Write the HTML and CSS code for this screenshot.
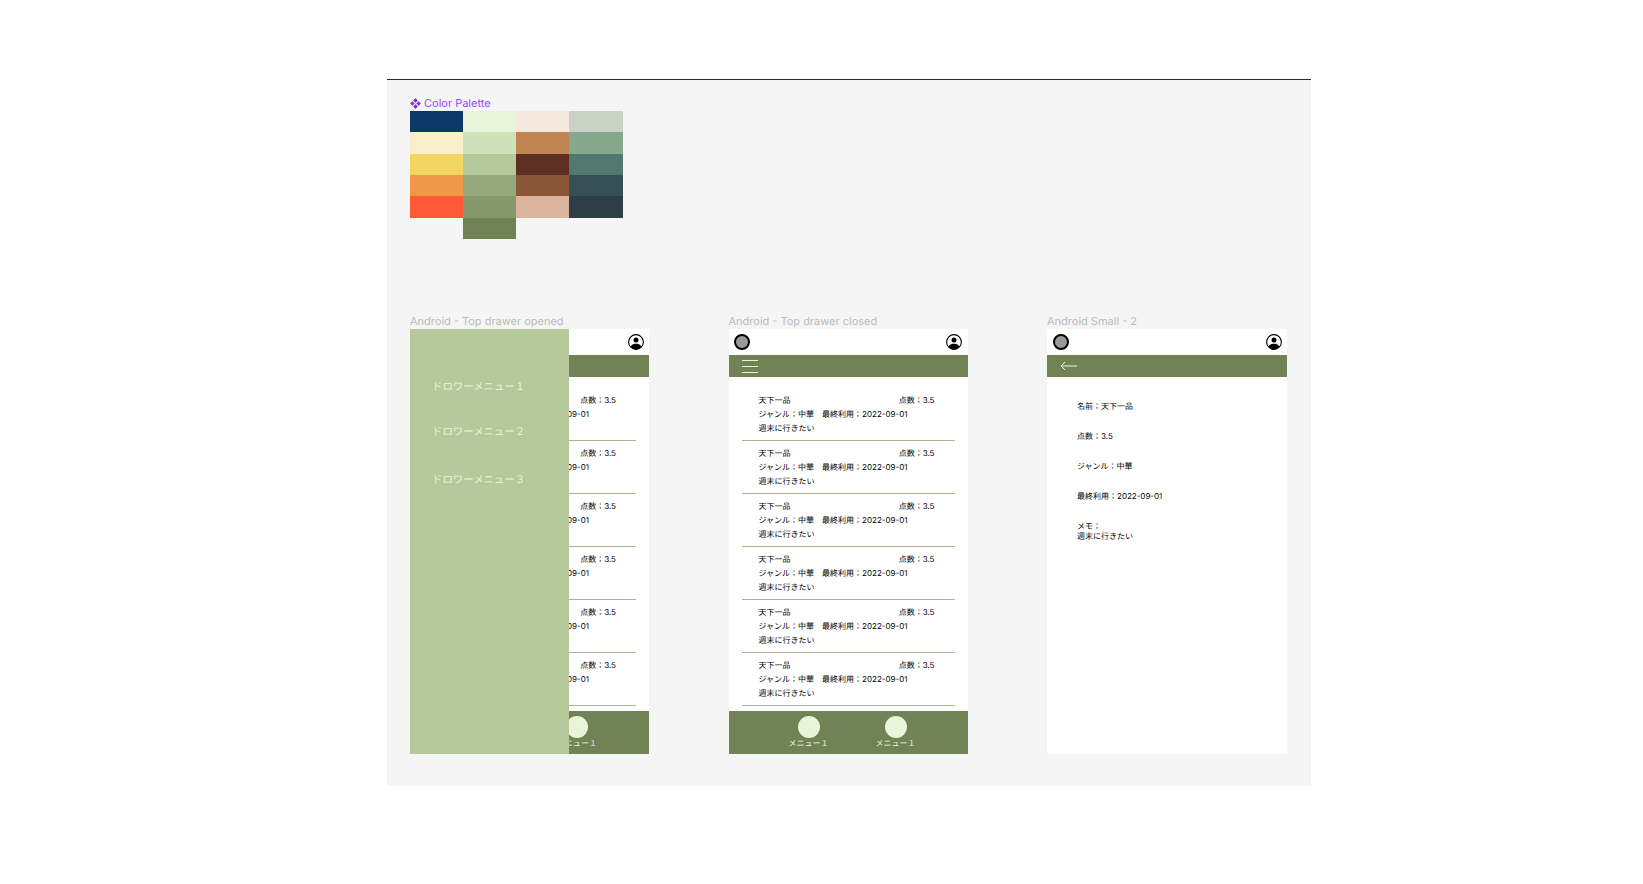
FILE: index.html
```html
<!DOCTYPE html>
<html lang="ja">
<head>
    <meta charset="UTF-8">
    <meta name="viewport" content="width=device-width, initial-scale=1.0">
    <title>Color Palette</title>
    <link rel="stylesheet" href="styles.css">
</head>
<body>
    <div class="canvas">
        <div class="palette-label">
            <svg class="component-icon" width="11" height="11" viewBox="0 0 10 10">
                <path d="M5 .3 6.9 2.2 5 4.1 3.1 2.2ZM2.2 3.1 4.1 5 2.2 6.9 .3 5ZM7.8 3.1 9.7 5 7.8 6.9 5.9 5ZM5 5.9 6.9 7.8 5 9.7 3.1 7.8Z"/>
            </svg>
            Color Palette
        </div>
        <div class="palette">
            <div class="swatch-col">
                <div class="swatch c-navy"></div>
                <div class="swatch c-cream"></div>
                <div class="swatch c-yellow"></div>
                <div class="swatch c-orange"></div>
                <div class="swatch c-red"></div>
            </div>
            <div class="swatch-col">
                <div class="swatch c-green1"></div>
                <div class="swatch c-green2"></div>
                <div class="swatch c-green3"></div>
                <div class="swatch c-green4"></div>
                <div class="swatch c-green5"></div>
                <div class="swatch c-green6"></div>
            </div>
            <div class="swatch-col">
                <div class="swatch c-brown1"></div>
                <div class="swatch c-brown2"></div>
                <div class="swatch c-brown3"></div>
                <div class="swatch c-brown4"></div>
                <div class="swatch c-brown5"></div>
            </div>
            <div class="swatch-col">
                <div class="swatch c-slate1"></div>
                <div class="swatch c-slate2"></div>
                <div class="swatch c-slate3"></div>
                <div class="swatch c-slate4"></div>
                <div class="swatch c-slate5"></div>
            </div>
        </div>

        <div class="frames">
            <section class="frame">
                <div class="frame-label">Android - Top drawer opened</div>
                <div class="screen">
                    <header class="top">
                        <span class="logo"></span>
                        <svg class="user" viewBox="0 0 16 16" width="16" height="16">
                            <circle cx="8" cy="8" r="7.4" fill="#fff" stroke="#000" stroke-width="1.1"/>
                            <circle cx="8" cy="6" r="2.5"/>
                            <path d="M2.8 12.2C4 10.2 6 9.8 8 9.8s4 .4 5.2 2.4C12 14.4 10 15.4 8 15.4s-4-1-5.2-3.2Z"/>
                        </svg>
                    </header>
                    <div class="bar"></div>
                    <ul class="list">
                        <li class="item"><div class="item-head"><span>天下一品</span><span class="score">点数：3.5</span></div><div>ジャンル：中華　最終利用：2022-09-01</div><div>週末に行きたい</div></li>
                        <li class="item"><div class="item-head"><span>天下一品</span><span class="score">点数：3.5</span></div><div>ジャンル：中華　最終利用：2022-09-01</div><div>週末に行きたい</div></li>
                        <li class="item"><div class="item-head"><span>天下一品</span><span class="score">点数：3.5</span></div><div>ジャンル：中華　最終利用：2022-09-01</div><div>週末に行きたい</div></li>
                        <li class="item"><div class="item-head"><span>天下一品</span><span class="score">点数：3.5</span></div><div>ジャンル：中華　最終利用：2022-09-01</div><div>週末に行きたい</div></li>
                        <li class="item"><div class="item-head"><span>天下一品</span><span class="score">点数：3.5</span></div><div>ジャンル：中華　最終利用：2022-09-01</div><div>週末に行きたい</div></li>
                        <li class="item"><div class="item-head"><span>天下一品</span><span class="score">点数：3.5</span></div><div>ジャンル：中華　最終利用：2022-09-01</div><div>週末に行きたい</div></li>
                    </ul>
                    <nav class="tabs">
                        <div class="tab"><span class="tab-dot"></span>メニュー１</div>
                        <div class="tab"><span class="tab-dot"></span>メニュー１</div>
                    </nav>
                    <aside class="drawer">
                        <div class="drawer-item first">ドロワーメニュー１</div>
                        <div class="drawer-item second">ドロワーメニュー２</div>
                        <div class="drawer-item third">ドロワーメニュー３</div>
                    </aside>
                </div>
            </section>

            <section class="frame">
                <div class="frame-label">Android - Top drawer closed</div>
                <div class="screen">
                    <header class="top">
                        <span class="logo"></span>
                        <svg class="user" viewBox="0 0 16 16" width="16" height="16">
                            <circle cx="8" cy="8" r="7.4" fill="#fff" stroke="#000" stroke-width="1.1"/>
                            <circle cx="8" cy="6" r="2.5"/>
                            <path d="M2.8 12.2C4 10.2 6 9.8 8 9.8s4 .4 5.2 2.4C12 14.4 10 15.4 8 15.4s-4-1-5.2-3.2Z"/>
                        </svg>
                    </header>
                    <div class="bar">
                        <svg class="bar-icon" width="16" height="14" viewBox="0 0 16 14">
                            <path d="M0 1.5H16M0 7.5H16M0 13.5H16" stroke="#e9f5db" fill="none"/>
                        </svg>
                    </div>
                    <ul class="list">
                        <li class="item"><div class="item-head"><span>天下一品</span><span class="score">点数：3.5</span></div><div>ジャンル：中華　最終利用：2022-09-01</div><div>週末に行きたい</div></li>
                        <li class="item"><div class="item-head"><span>天下一品</span><span class="score">点数：3.5</span></div><div>ジャンル：中華　最終利用：2022-09-01</div><div>週末に行きたい</div></li>
                        <li class="item"><div class="item-head"><span>天下一品</span><span class="score">点数：3.5</span></div><div>ジャンル：中華　最終利用：2022-09-01</div><div>週末に行きたい</div></li>
                        <li class="item"><div class="item-head"><span>天下一品</span><span class="score">点数：3.5</span></div><div>ジャンル：中華　最終利用：2022-09-01</div><div>週末に行きたい</div></li>
                        <li class="item"><div class="item-head"><span>天下一品</span><span class="score">点数：3.5</span></div><div>ジャンル：中華　最終利用：2022-09-01</div><div>週末に行きたい</div></li>
                        <li class="item"><div class="item-head"><span>天下一品</span><span class="score">点数：3.5</span></div><div>ジャンル：中華　最終利用：2022-09-01</div><div>週末に行きたい</div></li>
                    </ul>
                    <nav class="tabs">
                        <div class="tab"><span class="tab-dot"></span>メニュー１</div>
                        <div class="tab"><span class="tab-dot"></span>メニュー１</div>
                    </nav>
                </div>
            </section>

            <section class="frame wide">
                <div class="frame-label">Android Small - 2</div>
                <div class="screen">
                    <header class="top">
                        <span class="logo"></span>
                        <svg class="user" viewBox="0 0 16 16" width="16" height="16">
                            <circle cx="8" cy="8" r="7.4" fill="#fff" stroke="#000" stroke-width="1.1"/>
                            <circle cx="8" cy="6" r="2.5"/>
                            <path d="M2.8 12.2C4 10.2 6 9.8 8 9.8s4 .4 5.2 2.4C12 14.4 10 15.4 8 15.4s-4-1-5.2-3.2Z"/>
                        </svg>
                    </header>
                    <div class="bar">
                        <svg class="bar-icon" width="17" height="10" viewBox="0 0 17 10">
                            <path d="M17 5H1M5 1 1 5l4 4" stroke="#e9f5db" fill="none"/>
                        </svg>
                    </div>
                    <div class="detail">
                        <p>名前：天下一品</p>
                        <p>点数：3.5</p>
                        <p>ジャンル：中華</p>
                        <p>最終利用：2022-09-01</p>
                        <p>メモ：<br>週末に行きたい</p>
                    </div>
                </div>
            </section>
        </div>
    </div>
</body>
</html>
```

FILE: styles.css
```css
body {
    margin: 0;
    background: #fff;
    font-family: Inter, "Noto Sans CJK JP", sans-serif;
    text-rendering: geometricPrecision;
}

.canvas {
    box-sizing: border-box;
    width: 924px;
    height: 707px;
    margin: 79px 0 0 387px;
    padding: 16px 0 0 23px;
    background: #f5f5f5;
    border-top: 1px solid #2c2c2c;
}

/* palette */
.palette-label {
    display: flex;
    align-items: center;
    gap: 3px;
    height: 14px;
    margin-bottom: 1px;
    font-size: 11px;
    line-height: 14px;
    color: #9747ff;
}
.component-icon {
    fill: #7b2ff0;
    stroke: #7b2ff0;
    stroke-width: .4;
    stroke-linejoin: round;
}
.palette {
    display: flex;
    align-items: flex-start;
    width: 212.5px;
}
.swatch-col {
    flex: 1;
}
.swatch {
    height: 21.35px;
}
.c-navy { background: #0b3866; }
.c-cream { background: #f9f0c9; }
.c-yellow { background: #f5d561; }
.c-orange { background: #f09849; }
.c-red { background: #ff5a36; }
.c-green1 { background: #e9f5db; }
.c-green2 { background: #cfe1b9; }
.c-green3 { background: #b5c99a; }
.c-green4 { background: #97a97c; }
.c-green5 { background: #87986a; }
.c-green6 { background: #718355; }
.c-brown1 { background: #f3e9dc; }
.c-brown2 { background: #c08552; }
.c-brown3 { background: #5e3023; }
.c-brown4 { background: #895737; }
.c-brown5 { background: #dab49d; }
.c-slate1 { background: #cad2c5; }
.c-slate2 { background: #84a98c; }
.c-slate3 { background: #52796f; }
.c-slate4 { background: #354f52; }
.c-slate5 { background: #2f3e46; }

/* frames */
.frames {
    display: flex;
    gap: 79.5px;
    margin-top: 75px;
}
.frame {
    width: 239px;
}
.frame.wide {
    width: 240px;
}
.frame-label {
    height: 14px;
    margin-bottom: 1px;
    font-size: 11px;
    line-height: 14px;
    color: #bbb;
    white-space: nowrap;
}
.screen {
    position: relative;
    display: flex;
    flex-direction: column;
    height: 425px;
    background: #fff;
    overflow: hidden;
}
.top {
    display: flex;
    justify-content: space-between;
    align-items: center;
    flex: none;
    height: 26px;
    padding: 0 5.5px;
}
.logo {
    box-sizing: border-box;
    width: 16px;
    height: 16px;
    border: 2px solid #000;
    border-radius: 50%;
    background: #999;
}
.bar {
    display: flex;
    align-items: center;
    flex: none;
    height: 22px;
    padding-left: 13px;
    background: #718355;
}

/* list */
.list {
    flex: 1;
    margin: 0;
    padding: 11px 13px 0;
    list-style: none;
}
.item {
    box-sizing: border-box;
    height: 53px;
    padding: 5px 20px 0 17px;
    border-bottom: 1px solid #a8b78f;
    font-size: 8px;
    line-height: 14.2px;
    color: #000;
}
.item-head {
    display: flex;
    justify-content: space-between;
}

/* bottom nav */
.tabs {
    display: flex;
    flex: none;
    justify-content: center;
    gap: 47px;
    height: 43px;
    padding-left: 8px;
    background: #718355;
}
.tab {
    display: flex;
    flex-direction: column;
    align-items: center;
    flex: none;
    width: 40px;
    padding-top: 5px;
    font-size: 8px;
    line-height: 11px;
    color: #e9f5db;
    white-space: nowrap;
}
.tab-dot {
    flex: none;
    width: 22px;
    height: 22px;
    border-radius: 50%;
    background: #e9f5db;
}

/* drawer sits over the list */
.drawer {
    position: absolute;
    top: 0;
    left: 0;
    bottom: 0;
    box-sizing: border-box;
    width: 158.7px;
    padding-left: 22px;
    background: #b5c99a;
    font-size: 10.4px;
    line-height: 14px;
    color: #e9f5db;
}
.drawer-item {
    white-space: nowrap;
}
.drawer-item.first { margin-top: 51px; }
.drawer-item.second { margin-top: 31px; }
.drawer-item.third { margin-top: 34px; }

/* detail screen */
.detail {
    padding: 24px 0 0 30px;
    font-size: 8px;
    line-height: 10px;
    color: #000;
}
.detail p {
    margin: 0 0 20px;
}
```
